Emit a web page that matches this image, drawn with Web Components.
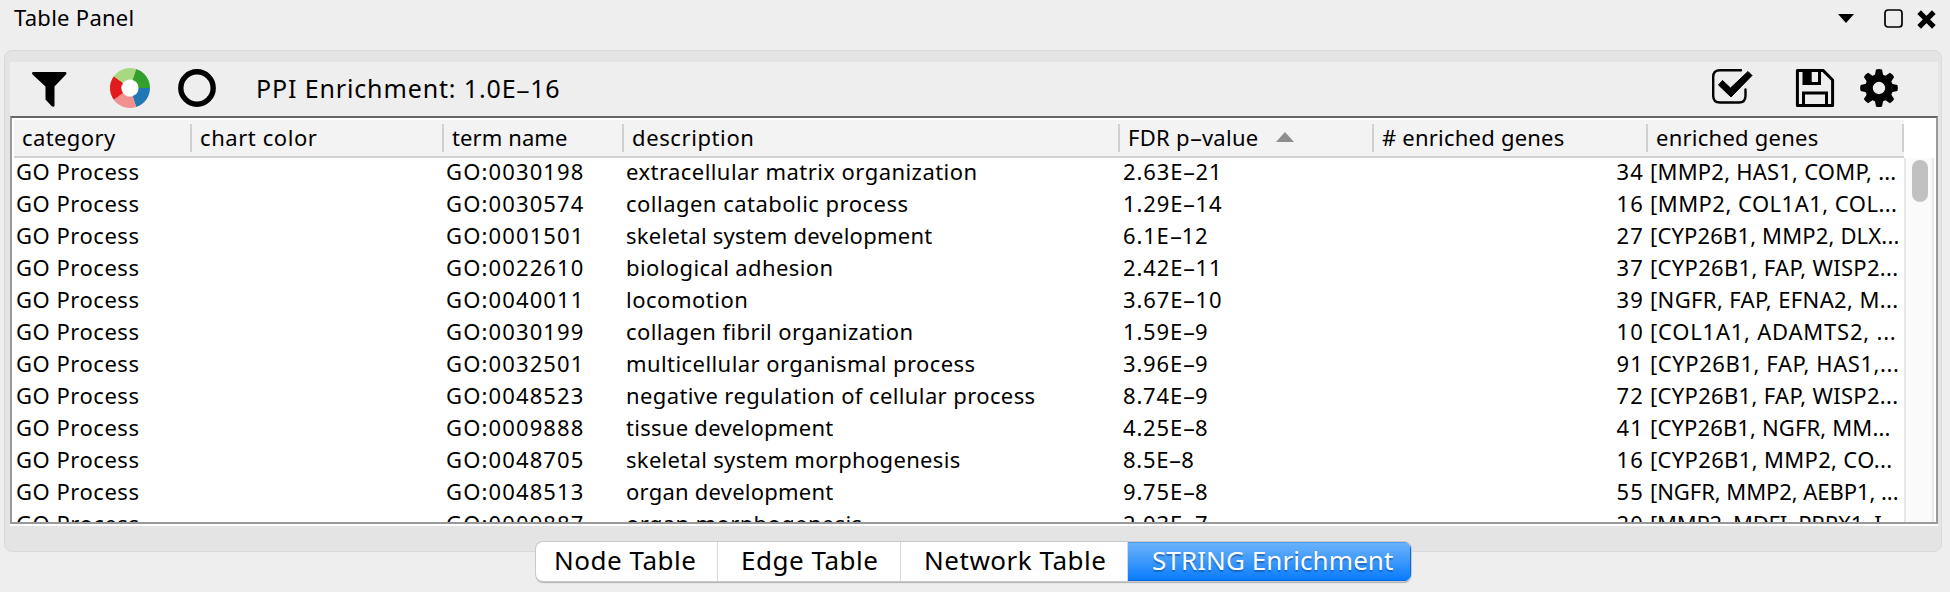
<!DOCTYPE html>
<html lang="en"><head><meta charset="utf-8"><title>Table Panel</title>
<style>
html,body{margin:0;height:100%;background:#eee;overflow:hidden}
body{font-family:"Noto Sans","Open Sans",sans-serif;color:#000}
</style></head><body><table-panel></table-panel>
<script>
// One line of text, tracked so that it fills the given width.
class FitText extends HTMLElement{
 connectedCallback(){
  const t=this.getAttribute('text'),w=+this.getAttribute('w');
  const esc=t.replace(/-/g,'<i>-</i>');
  this.attachShadow({mode:'open'}).innerHTML=`<style>:host{display:inline-block;white-space:pre;line-height:inherit}
  i{font-style:normal;display:inline-block;width:.55em;letter-spacing:0;text-align:center;transform:scale(1.85,.95)}</style><span>${esc}</span>`;
  if(w){const s=this.shadowRoot.querySelector('span');
   const n=t.length-(t.match(/-/g)||[]).length;
   const d=(w+1.5-s.getBoundingClientRect().width)/n;s.style.letterSpacing=d.toFixed(3)+'px';}
 }}
customElements.define('fit-text',FitText);

const ICONS={
filter:'<path d="M1 0h32.500q2 1 0 3L22.500 14.500v19.500q-1 1.500-3 0l-6-6.500V14.500L1 3q-2-2 0-3z"/>',
ring:'<circle cx="19" cy="19" r="16.2" fill="none" stroke="#000" stroke-width="5.4"/>',
check:'<path d="M29 1.200H8Q1.200 1.200 1.200 8V27Q1.200 33.500 8 33.500H27Q33.500 33.500 33.500 27V20.500" fill="none" stroke="#000" stroke-width="2.4" stroke-linecap="round"/><path d="M6.500 16l4-4.500 8 7.500L36 2.500l4 4L19 28z" stroke="#000" stroke-width="1" stroke-linejoin="round"/>',
save:'<path d="M1.400 1.400H27L36.600 11V36.600H1.400z" fill="none" stroke="#000" stroke-width="3" stroke-linejoin="round"/><path d="M6.500 2H25V16H6.500z"/><path d="M15.700 3h6.300v10h-6.300z" fill="#eee"/><path d="M7.500 36V24H30.500V36" fill="none" stroke="#000" stroke-width="3"/>',
down:'<path d="M0 0H16L8 9z"/>',
square:'<rect x="1" y="1" width="17" height="17" rx="3" fill="none" stroke="#000" stroke-width="1.7"/>',
close:'<path d="M3 3L14 14M14 3L3 14" stroke="#000" stroke-width="5.2" stroke-linecap="square" fill="none"/>',
sort:'<path d="M0 10L9 0L18 10z" fill="#8e8e8e"/>'};
(()=>{ // gear: eight teeth around a hub
 let s='<path fill-rule="evenodd" d="M19 5a14 14 0 1 0 .01 0zM19 12.800a6.200 6.200 0 1 1-.01 0z"/>';
 for(let i=0;i<8;i++)s+=`<path transform="rotate(${i*45} 19 19)" d="M16 .600q3-1 6 0l1.200 6h-8.400z"/>`;
 ICONS.gear=s;
 const p=(a,r)=>{a=a*Math.PI/180;return (20+r*Math.cos(a)).toFixed(2)+' '+(20+r*Math.sin(a)).toFixed(2)};
 ICONS.donut='<circle cx="20" cy="20" r="10" fill="#fff"/>'+[[0,72,'#1f78b4'],[72,144,'#f28f8f'],[144,216,'#e31a1c'],[216,288,'#a8d880'],[288,360,'#33a02c']].map(([a,b,c])=>`<path fill="${c}" d="M${p(a,20)}A20 20 0 0 1 ${p(b,20)}L${p(b,8.5)}A8.500 8.500 0 0 0 ${p(a,8.5)}z"/>`).join('');
})();
class UiIcon extends HTMLElement{connectedCallback(){const w=this.getAttribute('w'),h=this.getAttribute('h');
 this.attachShadow({mode:'open'}).innerHTML=`<style>:host{display:block;flex:none;width:${w}px;height:${h}px}svg{display:block;overflow:visible}</style><svg width="${w}" height="${h}">${ICONS[this.getAttribute('name')]}</svg>`}}
customElements.define('ui-icon',UiIcon);

class TitleBar extends HTMLElement{connectedCallback(){this.attachShadow({mode:'open'}).innerHTML=`<style>
:host{display:flex;height:50px;box-sizing:border-box;padding:0 15px 0 14px;font-size:22px;line-height:35px}
.r{margin-left:auto;display:flex;align-items:flex-start}
.d{margin:14px 30px 0 0}.s{margin:9px 15px 0 0}.x{margin-top:11px}</style>
<fit-text text="Table Panel" w="119"></fit-text><div class="r"><ui-icon class="d" name="down" w="16" h="9"></ui-icon><ui-icon class="s" name="square" w="19" h="19"></ui-icon><ui-icon class="x" name="close" w="17" h="17"></ui-icon></div>`}}
customElements.define('title-bar',TitleBar);

class ToolBar extends HTMLElement{connectedCallback(){this.attachShadow({mode:'open'}).innerHTML=`<style>
:host{display:flex;height:54px;background:#eee;align-items:flex-start;font-size:25px;line-height:52px}
.f{margin:10px 0 0 22px}.p{margin:6px 0 0 44px}.o{margin:7px 0 0 28px}fit-text{margin-left:40px}
.c{margin:7px 0 0 auto}.s{margin:7px 0 0 44px}.g{margin:7px 40px 0 26px}</style>
<ui-icon class="f" name="filter" w="34" h="36"></ui-icon><ui-icon class="p" name="donut" w="40" h="40"></ui-icon><ui-icon class="o" name="ring" w="38" h="38"></ui-icon><fit-text text="PPI Enrichment: 1.0E-16" w="303"></fit-text>
<ui-icon class="c" name="check" w="40" h="35"></ui-icon><ui-icon class="s" name="save" w="38" h="38"></ui-icon><ui-icon class="g" name="gear" w="38" h="38"></ui-icon>`}}
customElements.define('tool-bar',ToolBar);

const COLS='178px 252px 180px 496px 254px 274px 256px';
const HEAD=[['category',92],['chart color',116],['term name',114],['description',121],['FDR p-value',129],['# enriched genes',181],['enriched genes',161]];
class TableHead extends HTMLElement{connectedCallback(){this.attachShadow({mode:'open'}).innerHTML=`<style>
:host{display:grid;grid-template-columns:${COLS};width:1890px;height:40px;box-sizing:border-box;border-top:2px solid #fff;border-bottom:2px solid #d0d0d0;background:#f3f3f3;font-size:22px;line-height:34px}
div{display:flex;background:linear-gradient(#d0d0d0,#d0d0d0) right 4px/2px 28px no-repeat;padding-left:8px}
ui-icon{margin:12px 0 0 17px}</style>`+HEAD.map(([t,w],i)=>`<div><fit-text text="${t}" w="${w}"></fit-text>${i==4?'<ui-icon name="sort" w="18" h="10"></ui-icon>':''}</div>`).join('')}}
customElements.define('table-head',TableHead);

const ROWS=[
['0030198','extracellular matrix organization',350,'2.63E-21',98,34,'[MMP2, HAS1, COMP, ...',245],
['0030574','collagen catabolic process',281,'1.29E-14',98,16,'[MMP2, COL1A1, COL...',246],
['0001501','skeletal system development',305,'6.1E-12',84,27,'[CYP26B1, MMP2, DLX...',248],
['0022610','biological adhesion',206,'2.42E-11',98,37,'[CYP26B1, FAP, WISP2...',247],
['0040011','locomotion',121,'3.67E-10',98,39,'[NGFR, FAP, EFNA2, M...',247],
['0030199','collagen fibril organization',286,'1.59E-9',84,10,'[COL1A1, ADAMTS2, ...',245],
['0032501','multicellular organismal process',348,'3.96E-9',84,91,'[CYP26B1, FAP, HAS1,...',248],
['0048523','negative regulation of cellular process',408,'8.74E-9',84,72,'[CYP26B1, FAP, WISP2...',247],
['0009888','tissue development',206,'4.25E-8',84,41,'[CYP26B1, NGFR, MM...',239],
['0048705','skeletal system morphogenesis',333,'8.5E-8',70,16,'[CYP26B1, MMP2, CO...',241],
['0048513','organ development',206,'9.75E-8',84,55,'[NGFR, MMP2, AEBP1, ...',247],
['0009887','organ morphogenesis',235,'2.03E-7',84,20,'[MMP2, MDFI, PRRX1, I...',247]];
class TableRow extends HTMLElement{connectedCallback(){const r=ROWS[+this.getAttribute('n')];this.attachShadow({mode:'open'}).innerHTML=`<style>
:host{display:grid;grid-template-columns:${COLS};height:32px;font-size:22px;line-height:27px}
div{padding-left:2px}.v{padding-left:3px}.n{text-align:right;padding:0 4px 0 0}</style>
<div><fit-text text="GO Process" w="122"></fit-text></div><div></div><div><fit-text text="GO:${r[0]}" w="137"></fit-text></div><div><fit-text text="${r[1]}" w="${r[2]}"></fit-text></div><div class="v"><fit-text text="${r[3]}" w="${r[4]}"></fit-text></div><div class="n"><fit-text text="${r[5]}" w="26"></fit-text></div><div><fit-text text="${r[6]}" w="${r[7]}"></fit-text></div>`}}
customElements.define('table-row',TableRow);

class ScrollBar extends HTMLElement{connectedCallback(){this.attachShadow({mode:'open'}).innerHTML=`<style>
:host{display:block;box-sizing:border-box;width:30px;height:364px;background:#fafafa;border:solid #e8e8e8;border-width:0 2px;padding:2px 4px 0 6px}
div{width:16px;height:42px;border-radius:8px;background:#c1c1c1}</style><div></div>`}}
customElements.define('scroll-bar',ScrollBar);

class DataTable extends HTMLElement{connectedCallback(){this.attachShadow({mode:'open'}).innerHTML=`<style>
:host{display:block;box-sizing:border-box;height:408px;background:#fff;border:2px solid #999;border-top-color:#666;box-shadow:0 2px #fff;overflow:hidden}
table-head{margin-left:2px}.b{display:flex;height:364px}.rows{width:1892px;height:364px;padding-left:2px;box-sizing:border-box}</style>
<table-head></table-head><div class="b"><div class="rows">${ROWS.map((_,i)=>`<table-row n="${i}"></table-row>`).join('')}</div><scroll-bar></scroll-bar></div>`}}
customElements.define('data-table',DataTable);

class TabBar extends HTMLElement{connectedCallback(){this.attachShadow({mode:'open'}).innerHTML=`<style>
:host{display:flex;width:875px;height:39px;font-size:26px;line-height:36px;border-radius:7px;box-shadow:0 0 0 1px #c9c9c9,0 2px 1px #b0b0b0;overflow:hidden;background:#fff}
div{box-sizing:border-box;flex:none;border-right:1px solid #d8d8d8}
.a{width:182px;padding-left:18px}.b{width:183px;padding-left:23px}.c{width:227px;padding-left:23px}
.d{flex:1;border:0;padding-left:24px;color:#fff;background:linear-gradient(#6cb3fa,#3c98fb 50%,#067aff);text-shadow:0 2px 1px #0b4f9f99;box-shadow:inset 0 1px #4f9ff0,inset -1px -1px #0868e8}</style>
<div class="a"><fit-text text="Node Table" w="141"></fit-text></div><div class="b"><fit-text text="Edge Table" w="136"></fit-text></div><div class="c"><fit-text text="Network Table" w="181"></fit-text></div><div class="d"><fit-text text="STRING Enrichment" w="240"></fit-text></div>`}}
customElements.define('tab-bar',TabBar);

class TablePanel extends HTMLElement{connectedCallback(){this.attachShadow({mode:'open'}).innerHTML=`<style>
:host{display:block;width:1950px;height:592px;overflow:hidden;background:#eee}
.p{box-sizing:border-box;margin:0 8px 0 4px;height:502px;background:#e4e4e4;border:1px solid #dadada;border-radius:8px;padding:11px 3px 0 5px}
tab-bar{margin:-10px 0 0 536px;position:relative}</style>
<title-bar></title-bar><div class="p"><tool-bar></tool-bar><data-table></data-table></div><tab-bar></tab-bar>`}}
customElements.define('table-panel',TablePanel);
</script></body></html>
